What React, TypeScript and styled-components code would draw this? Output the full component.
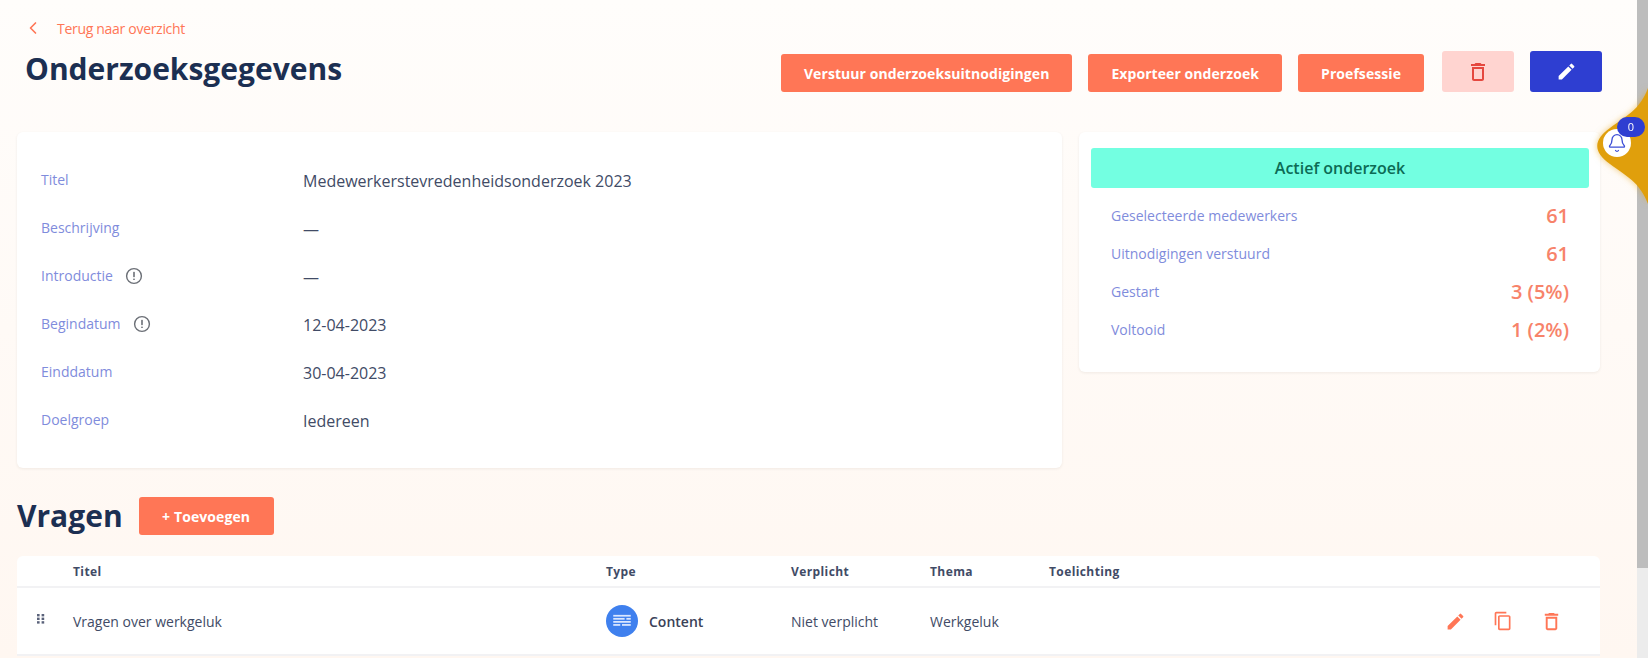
import styled, { createGlobalStyle } from "styled-components";
import { ChevronLeft, Bell } from "lucide-react";
import { MdEdit, MdOutlineDelete, MdContentCopy } from "react-icons/md";

const orange = "#ff7656";
const navy = "#1c2f52";
const periwinkle = "#7f8cdc";
const slate = "#414b66";

const GlobalStyle = createGlobalStyle`
  html, body {
    margin: 0;
    height: 658px;
    overflow: hidden;
    font-family: "Open Sans", "Liberation Sans", sans-serif;
    background: #fff;
  }
  * { box-sizing: border-box; }
`;

const details = [
  { label: "Titel", value: "Medewerkerstevredenheidsonderzoek 2023" },
  { label: "Beschrijving", value: "—" },
  { label: "Introductie", value: "—", hint: true },
  { label: "Begindatum", value: "12-04-2023", hint: true },
  { label: "Einddatum", value: "30-04-2023" },
  { label: "Doelgroep", value: "Iedereen" },
];

const stats = [
  { label: "Geselecteerde medewerkers", value: "61" },
  { label: "Uitnodigingen verstuurd", value: "61" },
  { label: "Gestart", value: "3 (5%)" },
  { label: "Voltooid", value: "1 (2%)" },
];

const HintIcon = () => (
  <HintSvg viewBox="0 0 18 18" aria-hidden>
    <circle cx="9" cy="9" r="7.4" fill="none" stroke="#6b6f76" strokeWidth="1.4" />
    <rect x="8.2" y="4.8" width="1.6" height="5.4" rx="0.6" fill="#6b6f76" />
    <rect x="8.2" y="11.4" width="1.6" height="1.7" rx="0.6" fill="#6b6f76" />
  </HintSvg>
);

const GripIcon = () => (
  <svg width="8" height="10" viewBox="0 0 8 10" aria-hidden>
    {[0, 3.6, 7.2].map((y) =>
      [0, 4.6].map((x) => (
        <rect key={`${x}-${y}`} x={x} y={y} width="2.6" height="2.4" fill="#5a627a" />
      ))
    )}
  </svg>
);

const ContentIcon = () => (
  <TypeBadge>
    <svg width="18" height="14" viewBox="0 0 20 16" aria-hidden>
      <rect x="0" y="1" width="20" height="2" fill="#dbe7ff" />
      <rect x="0" y="4.5" width="13" height="2" fill="#dbe7ff" />
      <rect x="15" y="4.5" width="5" height="2" fill="#dbe7ff" />
      <rect x="0" y="8" width="20" height="2" fill="#dbe7ff" />
      <rect x="0" y="11.5" width="8" height="2" fill="#dbe7ff" />
      <rect x="10" y="11.5" width="10" height="2" fill="#dbe7ff" />
    </svg>
  </TypeBadge>
);

export default function App() {
  return (
    <>
      <GlobalStyle />
      <Shell>
        <Page>
          <BackLink>
            <ChevronLeft size={20} strokeWidth={2} />
            <span>Terug naar overzicht</span>
          </BackLink>

          <PageHeader>
            <PageTitle>Onderzoeksgegevens</PageTitle>
            <Actions>
              <ActionButton>Verstuur onderzoeksuitnodigingen</ActionButton>
              <ActionButton>Exporteer onderzoek</ActionButton>
              <ActionButton>Proefsessie</ActionButton>
              <IconButton $variant="danger">
                <MdOutlineDelete size={24} />
              </IconButton>
              <IconButton $variant="primary">
                <MdEdit size={21} />
              </IconButton>
            </Actions>
          </PageHeader>

          <Overview>
            <DetailsCard>
              {details.map((row) => (
                <DetailRow key={row.label}>
                  <DetailLabel>
                    {row.label}
                    {row.hint && <HintIcon />}
                  </DetailLabel>
                  <DetailValue>{row.value}</DetailValue>
                </DetailRow>
              ))}
            </DetailsCard>

            <StatusCard>
              <StatusBanner>Actief onderzoek</StatusBanner>
              <StatList>
                {stats.map((row) => (
                  <StatRow key={row.label}>
                    <StatLabel>{row.label}</StatLabel>
                    <StatValue>{row.value}</StatValue>
                  </StatRow>
                ))}
              </StatList>
            </StatusCard>
          </Overview>

          <SectionHeader>
            <SectionTitle>Vragen</SectionTitle>
            <AddButton>+ Toevoegen</AddButton>
          </SectionHeader>

          <Table>
            <HeadRow>
              <span />
              <HeadCell>Titel</HeadCell>
              <HeadCell>Type</HeadCell>
              <HeadCell>Verplicht</HeadCell>
              <HeadCell>Thema</HeadCell>
              <HeadCell>Toelichting</HeadCell>
              <span />
            </HeadRow>
            <BodyRow>
              <GripCell>
                <GripIcon />
              </GripCell>
              <Cell>Vragen over werkgeluk</Cell>
              <TypeCell>
                <ContentIcon />
                Content
              </TypeCell>
              <Cell>Niet verplicht</Cell>
              <Cell>Werkgeluk</Cell>
              <span />
              <RowActions>
                <MdEdit size={21} />
                <MdContentCopy size={20} />
                <MdOutlineDelete size={23} />
              </RowActions>
            </BodyRow>
          </Table>
        </Page>

        <Scrollbar>
          <ScrollThumb />
        </Scrollbar>

        <NotificationTab>
          <svg width="52" height="116" viewBox="0 0 52 116" aria-hidden>
            <path
              d="M52 0 C44 22 30 28 14 40 C-3 52 -3 64 14 76 C30 88 44 94 52 116 Z"
              fill="#e09f0c"
            />
          </svg>
          <BellCircle>
            <Bell size={20} strokeWidth={1.6} />
          </BellCircle>
          <CountBadge>0</CountBadge>
        </NotificationTab>
      </Shell>
    </>
  );
}

const Shell = styled.div`
  position: relative;
  display: flex;
  width: 1648px;
  height: 658px;
  overflow: hidden;
`;

const Page = styled.main`
  flex: 1;
  min-width: 0;
  padding: 18px 37px 0 17px;
  background: linear-gradient(180deg, #fffdfb 0%, #fff7f1 100%);
`;

const Scrollbar = styled.div`
  width: 11px;
  background: #ececec;
`;

const ScrollThumb = styled.div`
  height: 568px;
  background: #bdbdbd;
`;

const BackLink = styled.a`
  display: flex;
  align-items: center;
  gap: 14px;
  height: 20px;
  padding-left: 6px;
  color: ${orange};
  font-size: 14px;
  letter-spacing: -0.3px;
`;

const PageHeader = styled.header`
  display: flex;
  justify-content: space-between;
  align-items: flex-start;
  height: 81px;
  margin-top: 13px;
`;

const PageTitle = styled.h1`
  margin: 0 0 0 8px;
  color: ${navy};
  font-size: 30px;
  line-height: 36px;
  font-weight: 700;
`;

const Actions = styled.div`
  display: flex;
  align-items: flex-end;
  gap: 16px;
  height: 41px;
  margin-right: -2px;
`;

const ActionButton = styled.button`
  height: 38px;
  padding: 0 23px;
  border: 0;
  border-radius: 3px;
  background: ${orange};
  color: #fff;
  font-family: inherit;
  font-size: 14px;
  font-weight: 700;
  letter-spacing: 0.07px;
`;

const IconButton = styled.button<{ $variant: "danger" | "primary" }>`
  display: flex;
  align-items: center;
  justify-content: center;
  width: 72px;
  height: 41px;
  margin-left: ${(p) => (p.$variant === "danger" ? "2px" : "0")};
  padding: 0;
  border: 0;
  border-radius: 3px;
  background: ${(p) => (p.$variant === "danger" ? "#ffd4d0" : "#2e3ed1")};
  color: ${(p) => (p.$variant === "danger" ? "#e5483f" : "#fff")};
`;

const Overview = styled.section`
  display: grid;
  grid-template-columns: 1045px 521px;
  gap: 17px;
  align-items: start;
`;

const DetailsCard = styled.div`
  height: 336px;
  padding: 25px 24px 0;
  border-radius: 6px;
  background: #fff;
  box-shadow: 0 1px 3px rgba(60, 50, 40, 0.08);
`;

const DetailRow = styled.div`
  display: grid;
  grid-template-columns: 262px 1fr;
  align-items: center;
  height: 48px;
`;

const DetailLabel = styled.div`
  display: flex;
  align-items: center;
  gap: 12px;
  margin-top: -3px;
  color: ${periwinkle};
  font-size: 14px;
`;

const HintSvg = styled.svg`
  width: 18px;
  height: 18px;
`;

const DetailValue = styled.div`
  color: ${slate};
  font-size: 16px;
`;

const StatusCard = styled.div`
  height: 240px;
  padding: 16px 11px 0 12px;
  border-radius: 6px;
  background: #fff;
  box-shadow: 0 1px 3px rgba(60, 50, 40, 0.08);
`;

const StatusBanner = styled.div`
  display: flex;
  align-items: center;
  justify-content: center;
  height: 40px;
  border-radius: 3px;
  background: #73ffe1;
  color: #0c6b55;
  font-size: 16px;
  font-weight: 600;
`;

const StatList = styled.div`
  padding: 8px 20px 0 20px;
`;

const StatRow = styled.div`
  display: flex;
  align-items: center;
  justify-content: space-between;
  height: 38px;
`;

const StatLabel = styled.span`
  color: ${periwinkle};
  font-size: 14px;
`;

const StatValue = styled.span`
  color: #f7836a;
  font-size: 20px;
  font-weight: 600;
`;

const SectionHeader = styled.div`
  display: flex;
  align-items: center;
  gap: 16px;
  margin-top: 29px;
  height: 38px;
`;

const SectionTitle = styled.h2`
  margin: 0;
  color: ${navy};
  font-size: 30px;
  line-height: 38px;
  font-weight: 700;
`;

const AddButton = styled.button`
  width: 135px;
  height: 38px;
  border: 0;
  border-radius: 3px;
  background: ${orange};
  color: #fff;
  font-family: inherit;
  font-size: 14px;
  font-weight: 700;
  letter-spacing: 0.1px;
`;

const Table = styled.div`
  margin-top: 21px;
  border-radius: 6px 6px 0 0;
  background: #fff;
`;

const columns = "56px 533px 185px 139px 119px 1fr 190px";

const HeadRow = styled.div`
  display: grid;
  grid-template-columns: ${columns};
  align-items: center;
  height: 32px;
  border-bottom: 2px solid #f2f2f4;
`;

const HeadCell = styled.span`
  color: ${slate};
  font-size: 12px;
  font-weight: 700;
  letter-spacing: 0.4px;
`;

const BodyRow = styled.div`
  display: grid;
  grid-template-columns: ${columns};
  align-items: center;
  height: 68px;
  border-bottom: 2px solid #f2f2f4;
`;

const GripCell = styled.span`
  display: flex;
  padding: 0 0 4px 20px;
`;

const Cell = styled.span`
  color: ${slate};
  font-size: 14px;
`;

const TypeCell = styled.span`
  display: flex;
  align-items: center;
  gap: 11px;
  color: #3a4258;
  font-size: 14px;
  font-weight: 600;
`;

const TypeBadge = styled.span`
  display: flex;
  align-items: center;
  justify-content: center;
  width: 32px;
  height: 32px;
  border-radius: 50%;
  background: #3f80ee;
`;

const RowActions = styled.span`
  display: flex;
  align-items: center;
  gap: 27px;
  padding-left: 35px;
  color: ${orange};
`;

const NotificationTab = styled.aside`
  position: absolute;
  top: 88px;
  right: 0;
  width: 52px;
  height: 116px;
  filter: drop-shadow(0 0 3px rgba(224, 159, 12, 0.55));
`;

const BellCircle = styled.span`
  position: absolute;
  top: 41px;
  left: 7px;
  display: flex;
  align-items: center;
  justify-content: center;
  width: 28px;
  height: 28px;
  border-radius: 50%;
  background: #fff;
  color: #3d4fd6;
`;

const CountBadge = styled.span`
  position: absolute;
  top: 29px;
  left: 21px;
  width: 28px;
  height: 20px;
  border-radius: 10px;
  background: #2e3ed1;
  color: #fff;
  font-size: 11px;
  line-height: 20px;
  text-align: center;
`;
